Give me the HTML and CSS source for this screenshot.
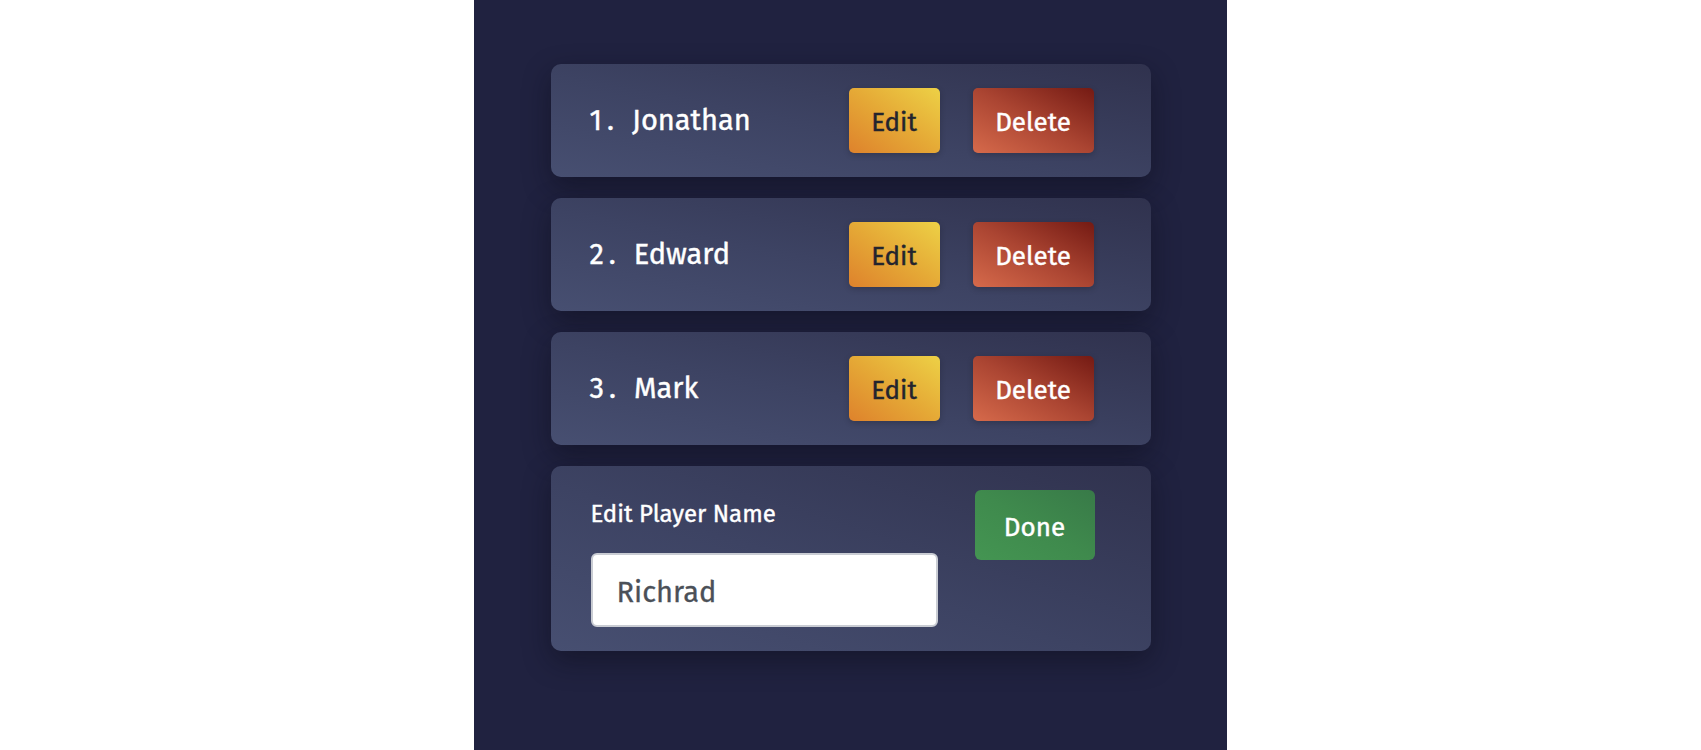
FILE: index.html
```html
<!DOCTYPE html>
<html lang="en">
<head>
<meta charset="utf-8">
<title>Players</title>
<link rel="stylesheet" href="styles.css">
</head>
<body>
<main class="panel">
  <ul class="players">
    <li class="card row">
      <span class="name"><span class="num">1.</span>Jonathan</span>
      <button class="btn btn-edit">Edit</button>
      <button class="btn btn-delete">Delete</button>
    </li>
    <li class="card row">
      <span class="name"><span class="num">2.</span>Edward</span>
      <button class="btn btn-edit">Edit</button>
      <button class="btn btn-delete">Delete</button>
    </li>
    <li class="card row">
      <span class="name"><span class="num">3.</span>Mark</span>
      <button class="btn btn-edit">Edit</button>
      <button class="btn btn-delete">Delete</button>
    </li>
    <li class="card edit-card">
      <div class="edit-fields">
        <label class="edit-label" for="player-name">Edit Player Name</label>
        <input id="player-name" class="edit-input" type="text" value="Richrad">
      </div>
      <button class="btn btn-done">Done</button>
    </li>
  </ul>
</main>
</body>
</html>
```

FILE: styles.css
```css
html, body {
  margin: 0;
  padding: 0;
  background: #ffffff;
  height: 100%;
}

body {
  font-family: "Fira Sans", "Open Sans", "Noto Sans", sans-serif;
  display: flex;
  justify-content: center;
}

.panel {
  width: 753px;
  min-height: 750px;
  background: #202240;
  padding-top: 64px;
  box-sizing: border-box;
}

.players {
  list-style: none;
  margin: 0 auto;
  padding: 0;
  width: 600px;
  display: flex;
  flex-direction: column;
  gap: 21px;
}

.card {
  border-radius: 10px;
  background: linear-gradient(to top right, #474f71 0%, #3d4363 45%, #30324e 100%);
  box-shadow: 0 10px 28px rgba(10, 10, 22, 0.45);
  box-sizing: border-box;
}

.row {
  height: 113px;
  display: flex;
  align-items: center;
  padding: 0 57px 0 39px;
}

.name {
  flex: 1;
  color: #ffffff;
  font-size: 29px;
  font-weight: 400;
  white-space: nowrap;
  -webkit-text-stroke: 0.4px currentColor;
}

.num {
  letter-spacing: 5px;
  margin-right: 13px;
}

.btn {
  border: none;
  border-radius: 5px;
  font-family: inherit;
  font-size: 26px;
  font-weight: 400;
  height: 65px;
  line-height: 33px;
  padding: 4px 0 0;
  cursor: pointer;
  -webkit-text-stroke: 0.4px currentColor;
}

.btn-edit {
  width: 91px;
  color: #23242e;
  background: linear-gradient(to top right, #de822c 0%, #e5a936 50%, #edd146 100%);
  box-shadow: 0 2px 6px rgba(0, 0, 0, 0.2);
}

.btn-delete {
  width: 121px;
  margin-left: 33px;
  color: #ffffff;
  background: linear-gradient(to top right, #d66a4b 0%, #ab4532 50%, #741a13 100%);
  box-shadow: 0 2px 6px rgba(0, 0, 0, 0.2);
}

.edit-card {
  height: 185px;
  display: flex;
  align-items: flex-start;
  justify-content: space-between;
  padding: 24px 56px 24px 40px;
}

.edit-fields {
  display: flex;
  flex-direction: column;
}

.edit-label {
  color: #ffffff;
  font-size: 24px;
  font-weight: 400;
  line-height: 32px;
  margin-top: 8px;
  -webkit-text-stroke: 0.4px currentColor;
}

.edit-input {
  margin-top: 23px;
  width: 347px;
  height: 74px;
  box-sizing: border-box;
  border: 2px solid #c9ccd3;
  border-radius: 6px;
  background: #ffffff;
  padding: 4px 24px 0;
  font-family: inherit;
  font-size: 29px;
  font-weight: 400;
  color: #4b5058;
  outline: none;
  -webkit-text-stroke: 0.3px currentColor;
}

.btn-done {
  width: 120px;
  height: 70px;
  padding: 4px 0 0;
  color: #ffffff;
  border-radius: 6px;
  background: linear-gradient(to top right, #449552 0%, #3f8a4d 50%, #387a48 100%);
}
```
